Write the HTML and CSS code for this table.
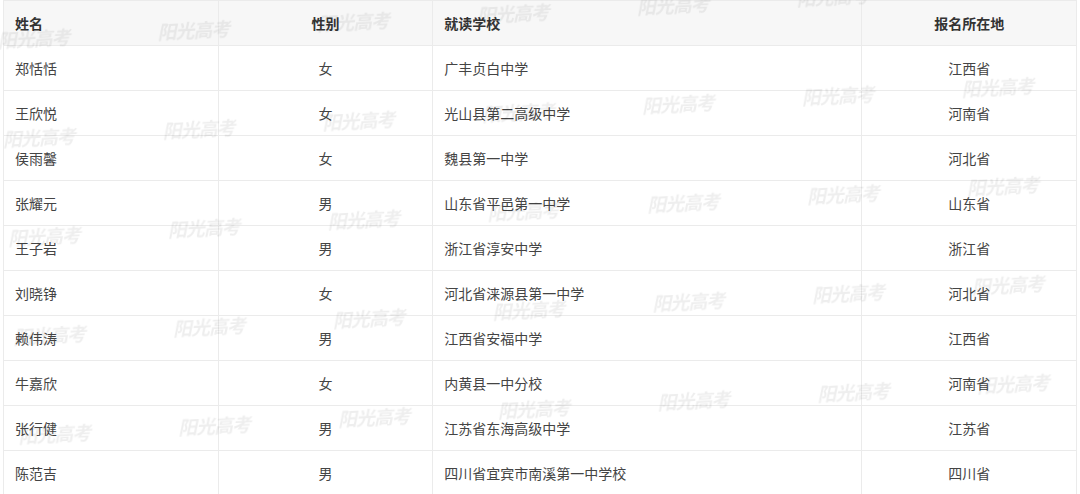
FILE: index.html
```html
<!DOCTYPE html>
<html lang="zh-CN">
<head>
<meta charset="utf-8">
<title>录取名单</title>
<link rel="stylesheet" href="styles.css">
</head>
<body>
<div class="wrap">
  <table class="list">
    <colgroup>
      <col class="c-name"><col class="c-sex"><col class="c-school"><col class="c-area">
    </colgroup>
    <thead>
      <tr><th class="left">姓名</th><th>性别</th><th class="left">就读学校</th><th>报名所在地</th></tr>
    </thead>
    <tbody>
      <tr><td class="left">郑恬恬</td><td>女</td><td class="left">广丰贞白中学</td><td>江西省</td></tr>
      <tr><td class="left">王欣悦</td><td>女</td><td class="left">光山县第二高级中学</td><td>河南省</td></tr>
      <tr><td class="left">侯雨馨</td><td>女</td><td class="left">魏县第一中学</td><td>河北省</td></tr>
      <tr><td class="left">张耀元</td><td>男</td><td class="left">山东省平邑第一中学</td><td>山东省</td></tr>
      <tr><td class="left">王子岩</td><td>男</td><td class="left">浙江省淳安中学</td><td>浙江省</td></tr>
      <tr><td class="left">刘晓铮</td><td>女</td><td class="left">河北省涞源县第一中学</td><td>河北省</td></tr>
      <tr><td class="left">赖伟涛</td><td>男</td><td class="left">江西省安福中学</td><td>江西省</td></tr>
      <tr><td class="left">牛嘉欣</td><td>女</td><td class="left">内黄县一中分校</td><td>河南省</td></tr>
      <tr><td class="left">张行健</td><td>男</td><td class="left">江苏省东海高级中学</td><td>江苏省</td></tr>
      <tr><td class="left">陈范吉</td><td>男</td><td class="left">四川省宜宾市南溪第一中学校</td><td>四川省</td></tr>
    </tbody>
  </table>
  <div class="marks" aria-hidden="true">
    <div class="mark-grid">
      <span>阳光高考</span><span>阳光高考</span><span>阳光高考</span><span>阳光高考</span><span>阳光高考</span><span>阳光高考</span><span>阳光高考</span>
      <span>阳光高考</span><span>阳光高考</span><span>阳光高考</span><span>阳光高考</span><span>阳光高考</span><span>阳光高考</span><span>阳光高考</span>
      <span>阳光高考</span><span>阳光高考</span><span>阳光高考</span><span>阳光高考</span><span>阳光高考</span><span>阳光高考</span><span>阳光高考</span>
      <span>阳光高考</span><span>阳光高考</span><span>阳光高考</span><span>阳光高考</span><span>阳光高考</span><span>阳光高考</span><span>阳光高考</span>
      <span>阳光高考</span><span>阳光高考</span><span>阳光高考</span><span>阳光高考</span><span>阳光高考</span><span>阳光高考</span><span>阳光高考</span>
    </div>
  </div>
</div>
</body>
</html>
```

FILE: styles.css
```css
html, body {
  margin: 0;
  padding: 0;
  background: #ffffff;
}

body {
  font-family: "Noto Sans CJK SC", "Noto Sans", sans-serif;
  font-size: 14px;
  color: #444;
}

.wrap {
  position: relative;
  width: 1080px;
  height: 494px;
  overflow: hidden;
  padding-left: 3px;
  box-sizing: border-box;
}

.list {
  width: 1074px;
  border-collapse: collapse;
  table-layout: fixed;
}

.c-name, .c-sex, .c-area { width: 20%; }
.c-school { width: 40%; }

.list th,
.list td {
  height: 44px;
  padding: 0 11px;
  border: 1px solid #ebebeb;
  text-align: center;
  vertical-align: middle;
  line-height: 20px;
  white-space: nowrap;
}

.list th {
  background: #f7f7f7;
  font-weight: bold;
  color: #333;
}

.list td {
  color: #444;
}

.list .left {
  text-align: left;
}

.marks {
  position: absolute;
  inset: 0;
  pointer-events: none;
  overflow: hidden;
}

.mark-grid {
  display: grid;
  grid-template-columns: repeat(7, 160px);
  grid-auto-rows: 99px;
  margin: 31px 0 0 -3px;
  transform: rotate(-3deg);
  transform-origin: 0 0;
}

.mark-grid span {
  font-family: "Liberation Serif", "Noto Sans CJK SC", serif;
  font-size: 19px;
  font-weight: bold;
  font-style: italic;
  line-height: 22px;
  color: rgba(0, 0, 0, 0.065);
  letter-spacing: -1px;
  filter: blur(0.4px);
}
```
